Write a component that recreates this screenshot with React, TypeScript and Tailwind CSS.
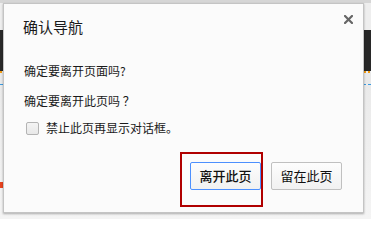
import React from 'react';

const font = { fontFamily: '"Microsoft YaHei", "Noto Sans CJK SC", "Liberation Sans", sans-serif' };

function CloseIcon() {
  return (
    <svg width="9" height="9" viewBox="0 0 9 9" className="block">
      <path d="M1 1 L8 8 M8 1 L1 8" stroke="#666666" strokeWidth="2.2" strokeLinecap="square" />
    </svg>
  );
}

export default function App() {
  return (
    <div className="relative w-[371px] h-[219px] overflow-hidden bg-[#ececec]" style={font}>
      {/* page behind the dialog */}
      <div className="flex flex-col h-full">
        <div className="h-[30px] bg-[#eeeeee] border-t-[3px] border-[#d6d6d6]" />
        <div className="h-[41px] bg-[#282828]" />
        <div className="h-[2px] bg-[repeating-linear-gradient(90deg,#f39c12_0_2px,transparent_2px_4px)]" />
        <div className="h-[11px] bg-[#e9e9e9]" />
        <div className="h-[1px] bg-[repeating-linear-gradient(90deg,#3b9be0_0_6px,transparent_6px_8px)]" />
        <div className="flex-1 flex flex-col bg-gradient-to-b from-[#eaeaea] to-[#f4f4f4]">
          <div className="h-[97px]" />
          <div className="h-[6px] w-[3px] bg-[#e8431e]" />
        </div>
      </div>

      {/* dialog */}
      <div className="absolute left-[3px] top-[3px] w-[361px] h-[210px] bg-[#fbfbfb] border border-[#c4c4c4] shadow-[0_1px_2px_rgba(0,0,0,0.3)] flex flex-col">
        <div className="flex items-start justify-between pl-[19px] pr-[10px]">
          <div className="mt-[13px] text-[15px] leading-[20px] text-[#1a1a1a]">确认导航</div>
          <div className="mt-[11px]">
            <CloseIcon />
          </div>
        </div>
        <div className="mt-[26px] pl-[20px] text-[12px] leading-[16px] text-[#1a1a1a]">确定要离开页面吗?</div>
        <div className="mt-[14px] pl-[20px] text-[12px] leading-[16px] text-[#1a1a1a]">确定要离开此页吗 ？</div>
        <div className="mt-[11px] pl-[22px] flex items-center gap-[7px] text-[12px] leading-[16px] text-[#1a1a1a]">
          <span className="w-[13px] h-[13px] rounded-[2px] border border-[#b4b4b4] bg-gradient-to-b from-[#f4f4f4] to-[#e8e8e8]" />
          <span>禁止此页再显示对话框。</span>
        </div>
        <div className="mt-[26px] pr-[21px] flex justify-end gap-[10px]">
          <div className="relative">
            <button className="w-[71px] h-[28px] rounded-[2px] border border-[#4d90fe] bg-gradient-to-b from-[#fdfdfd] to-[#f1f1f1] text-[13px] font-medium text-[#111]">
              离开此页
            </button>
            <div className="absolute left-[-10px] top-[-10px] w-[83px] h-[55px] border-2 border-[#b00000] pointer-events-none" />
          </div>
          <button className="w-[71px] h-[28px] rounded-[2px] border border-[#c0c0c0] bg-gradient-to-b from-[#fdfdfd] to-[#f1f1f1] text-[13px] text-[#111]">
            留在此页
          </button>
        </div>
      </div>
    </div>
  );
}
